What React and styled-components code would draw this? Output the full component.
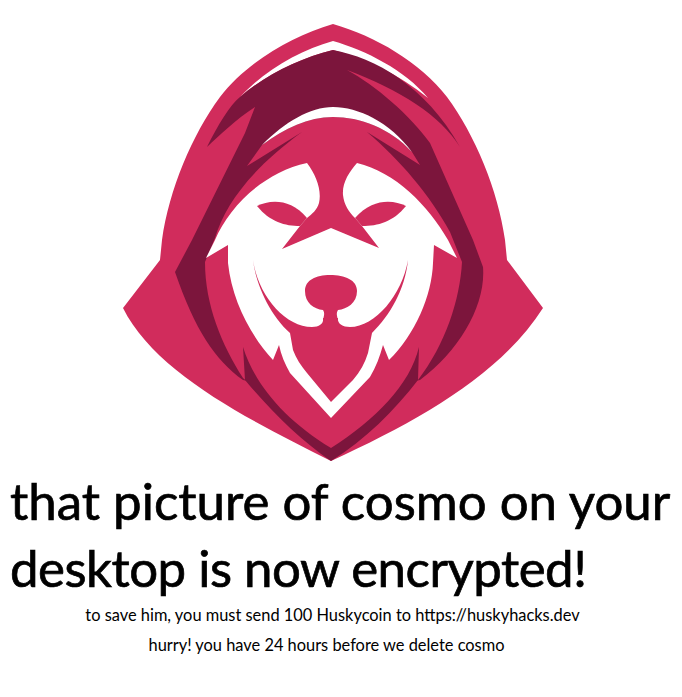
import React from "react";
import styled, { createGlobalStyle } from "styled-components";

const GlobalStyle = createGlobalStyle`
  html, body {
    margin: 0;
    background: #ffffff;
  }
`;

const Page = styled.div`
  width: 682px;
  height: 697px;
  overflow: hidden;
  font-family: "Comic Sans MS", "Lato", sans-serif;
  color: #000000;
`;

const Logo = styled.svg`
  display: block;
  width: 682px;
  height: 467px;
`;

const Headline = styled.h1`
  margin: 0 0 -1px 10px;
  width: 672px;
  font-size: 51px;
  font-weight: 400;
  line-height: 67px;
  white-space: nowrap;
  -webkit-text-stroke: 0.7px #000000;
`;

const HeadlineLine = styled.span`
  display: block;
  letter-spacing: ${(p) => p.$spacing || "0"};
`;

const Note = styled.p`
  margin: 0;
  width: ${(p) => p.$width}px;
  text-align: center;
  font-size: 16.4px;
  line-height: 30px;
  white-space: nowrap;
`;

const PINK = "#d12c5c";
const DARK = "#7c153c";

const Husky = () => (
  <Logo viewBox="0 0 682 467" aria-label="husky logo">
    {/* hood */}
    <path
      fill={PINK}
      d="M333,24 C375,36 420,62 447,97 C475,135 498,190 505,240 L507,260 L543,308 C500,375 420,420 331,461 C245,418 155,372 123,308 L160,260 L162,240 C169,190 192,135 220,97 C247,62 292,36 333,24 Z"
    />
    {/* white sliver under the hood edge */}
    <path
      fill="#ffffff"
      d="M240,97 C265,70 300,50 333,41 C365,50 405,70 428,98 C400,75 365,58 333,50 C300,58 265,75 240,97 Z"
    />
    {/* dark band */}
    <path
      fill={DARK}
      d="M333,50 C375,58 425,85 460,147 C440,115 400,90 347,70 C375,85 410,115 430,143 L473,240 L483,267 C486,305 460,350 420,380 L330,400 L243,380 C215,360 195,330 175,272 L192,240 L245,133 L255,107 C235,120 220,135 207,147 C218,125 230,105 240,97 C265,75 300,58 333,50 Z"
    />
    {/* inner pink head */}
    <path
      fill={PINK}
      d="M333,117 C360,117 390,128 412,152 L420,165 L367,132 C400,160 430,195 450,232 L462,262 C460,300 445,345 418,380 L331,455 L243,378 C222,345 205,305 205,262 L215,238 C225,205 250,170 302,132 L247,166 L262,145 C285,128 308,117 333,117 Z"
    />
    {/* white crescent over the brow */}
    <path
      fill="#ffffff"
      d="M262,145 C285,122 310,107 333,107 C358,107 390,122 412,152 C390,128 360,117 333,117 C308,117 285,128 262,145 Z"
    />
    {/* lower chevron */}
    <path
      fill={DARK}
      d="M243,347 C255,385 285,420 331,448 C375,420 410,385 419,347 L418,380 C395,410 365,440 331,461 C300,440 270,410 245,380 Z"
    />
    {/* white face */}
    <path
      fill="#ffffff"
      d="M307,163 C316,175 322,190 319,203 C317,210 312,214 307,218 L300,226 L282,249 L331,228 L379,248 L362,226 L355,218 C349,212 344,205 343,195 C342,183 349,172 357,163 C395,172 428,205 448,240 L457,258 L434,245 L433,263 C432,295 415,335 389,360 L383,345 C380,356 376,367 370,377 L331,418 L290,373 C285,364 281,355 279,345 L273,360 C250,335 232,300 228,263 L228,245 L206,258 L215,240 C230,205 265,172 307,163 Z"
    />
    {/* eyes */}
    <path
      fill={PINK}
      d="M257,206 C270,200 290,198 307,218 L300,226 C285,226 270,222 257,206 Z"
    />
    <path
      fill={PINK}
      d="M406,206 C393,200 373,198 355,218 L362,226 C378,226 393,222 406,206 Z"
    />
    {/* muzzle: chin crescent */}
    <path
      fill={PINK}
      d="M253,260 C256,285 270,315 290,333 L293,350 C296,358 301,366 307,373 L331,402 L353,380 C360,372 365,363 368,353 L372,333 C390,315 405,290 408,260 C402,295 375,327 350,327 C342,327 337,323 338,318 L323,318 C324,323 320,327 312,327 C285,327 258,295 253,260 Z"
    />
    {/* nose */}
    <path
      fill={PINK}
      d="M330,275 C345,275 357,280 357,291 C357,303 347,309 338,310 C336,313 337,316 338,320 L323,320 C324,316 325,313 323,310 C314,309 305,303 305,291 C305,280 316,275 330,275 Z"
    />
  </Logo>
);

export default function App() {
  return (
    <Page>
      <GlobalStyle />
      <Husky />
      <Headline>
        <HeadlineLine>that picture of cosmo on your</HeadlineLine>
        <HeadlineLine $spacing="-0.5px">desktop is now encrypted!</HeadlineLine>
      </Headline>
      <Note $width={665}>to save him, you must send 100 Huskycoin to https://huskyhacks.dev</Note>
      <Note $width={653}>hurry! you have 24 hours before we delete cosmo</Note>
    </Page>
  );
}
